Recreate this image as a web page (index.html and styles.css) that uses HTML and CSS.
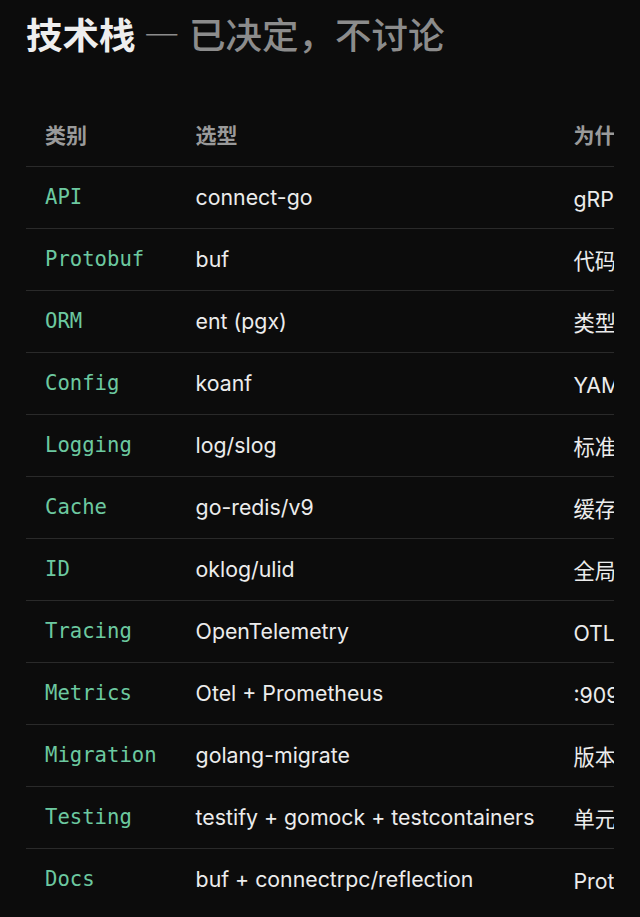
FILE: index.html
```html
<!DOCTYPE html>
<html lang="zh">
<head>
    <meta charset="UTF-8">
    <title>技术栈</title>
    <link rel="stylesheet" href="styles.css">
</head>
<body>
<div class="page">
    <h1 class="title"><b>技术栈</b><span class="dash">—</span>已决定，不讨论</h1>
    <div class="table_wrap">
        <table class="stack">
            <thead>
            <tr><th>类别</th><th>选型</th><th>为什么</th></tr>
            </thead>
            <tbody>
            <tr><td class="kind">API</td><td>connect-go</td><td>gRPC 兼容，浏览器可直连</td></tr>
            <tr><td class="kind">Protobuf</td><td>buf</td><td>代码生成、lint 与破坏性检查</td></tr>
            <tr><td class="kind">ORM</td><td>ent (pgx)</td><td>类型安全的 schema 与查询</td></tr>
            <tr><td class="kind">Config</td><td>koanf</td><td>YAML + 环境变量覆盖</td></tr>
            <tr><td class="kind">Logging</td><td>log/slog</td><td>标准库，结构化日志</td></tr>
            <tr><td class="kind">Cache</td><td>go-redis/v9</td><td>缓存、限流与分布式锁</td></tr>
            <tr><td class="kind">ID</td><td>oklog/ulid</td><td>全局唯一且按时间有序</td></tr>
            <tr><td class="kind">Tracing</td><td>OpenTelemetry</td><td>OTLP 导出到采集器</td></tr>
            <tr><td class="kind">Metrics</td><td>Otel + Prometheus</td><td>:9090/metrics 暴露指标</td></tr>
            <tr><td class="kind">Migration</td><td>golang-migrate</td><td>版本化的 SQL 迁移</td></tr>
            <tr><td class="kind">Testing</td><td>testify + gomock + testcontainers</td><td>单元测试与集成测试</td></tr>
            <tr><td class="kind">Docs</td><td>buf + connectrpc/reflection</td><td>Protobuf 即文档，支持反射</td></tr>
            </tbody>
        </table>
    </div>
</div>
</body>
</html>
```

FILE: styles.css
```css
html, body {
    margin: 0;
    background-color: #0c0c0c;
}
.page {
    box-sizing: border-box;
    width: 640px;
    padding: 12px 26px 0 26px;
    font-family: Inter, "Noto Sans CJK SC", sans-serif;
    color: #ececec;
}
.page>.title {
    margin: 0;
    font-size: 36.5px;
    line-height: 44px;
    font-weight: 500;
    color: #8c8c8c;
    font-family: "Noto Sans CJK SC", sans-serif;
}
.page>.title>b {
    font-weight: 700;
    color: #eeeeee;
}
.page>.title>.dash {
    margin: 0 9px 0 8px;
}
.table_wrap {
    margin-top: 47px;
    width: 588px;
    overflow-x: auto;
    overflow-y: hidden;
    scrollbar-width: none;
    clip-path: inset(0);
}
.table_wrap::-webkit-scrollbar {
    display: none;
}
.stack {
    border-collapse: collapse;
    white-space: nowrap;
}
.stack th, .stack td {
    height: 62px;
    box-sizing: border-box;
    padding: 0 20px 0 19px;
    text-align: left;
    vertical-align: middle;
    border-bottom: 1px solid #2a2a2a;
}
.stack tbody tr:last-child td {
    border-bottom: 0;
}
.stack th {
    height: 63px;
    font-family: "Noto Sans CJK SC", sans-serif;
    font-size: 21px;
    font-weight: 700;
    color: #9a9a9a;
}
.stack td {
    font-size: 21.3px;
    color: #ececec;
}
.stack td.kind {
    font-family: "DejaVu Sans Mono", monospace;
    font-size: 20.6px;
    color: #6cc9a0;
}
```
